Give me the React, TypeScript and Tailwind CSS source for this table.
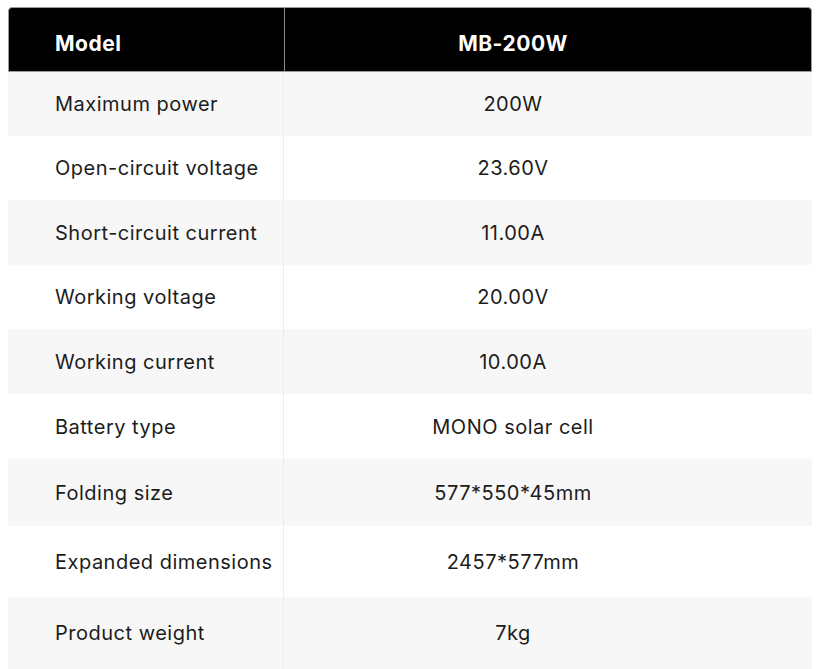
const ROWS: { label: string; value: string; h: string; bg: string }[] = [
  { label: "Maximum power", value: "200W", h: "h-[64px]", bg: "bg-[#f7f7f7]" },
  { label: "Open-circuit voltage", value: "23.60V", h: "h-[64px]", bg: "bg-white" },
  { label: "Short-circuit current", value: "11.00A", h: "h-[65px]", bg: "bg-[#f7f7f7]" },
  { label: "Working voltage", value: "20.00V", h: "h-[64px]", bg: "bg-white" },
  { label: "Working current", value: "10.00A", h: "h-[65px]", bg: "bg-[#f7f7f7]" },
  { label: "Battery type", value: "MONO solar cell", h: "h-[65px]", bg: "bg-white" },
  { label: "Folding size", value: "577*550*45mm", h: "h-[67px]", bg: "bg-[#f7f7f7]" },
  { label: "Expanded dimensions", value: "2457*577mm", h: "h-[71px]", bg: "bg-white" },
  { label: "Product weight", value: "7kg", h: "h-[72px]", bg: "bg-[#f7f7f7]" },
];

export default function App() {
  return (
    <div className="w-[820px] h-[669px] overflow-hidden bg-white pt-[7px] px-[8px] font-['Inter','Noto_Sans',sans-serif] text-[#1c1c1c] tracking-[0.5px]">
      <div className="flex h-[65px] rounded-t-[4px] bg-black text-white text-[21px] font-bold border border-[#9a9a9a]">
        <div className="w-[276px] flex items-center pl-[46px] pt-[9px] border-r border-[#8a8a8a]">Model</div>
        <div className="flex-1 flex items-center justify-center pt-[9px] pr-[70px]">MB-200W</div>
      </div>
      {ROWS.map((r) => (
        <div key={r.label} className={`flex ${r.h} ${r.bg} text-[20px]`}>
          <div className="w-[276px] flex items-center pl-[47px] border-r border-[#ececec]">{r.label}</div>
          <div className="flex-1 flex items-center justify-center pr-[70px]">{r.value}</div>
        </div>
      ))}
    </div>
  );
}
